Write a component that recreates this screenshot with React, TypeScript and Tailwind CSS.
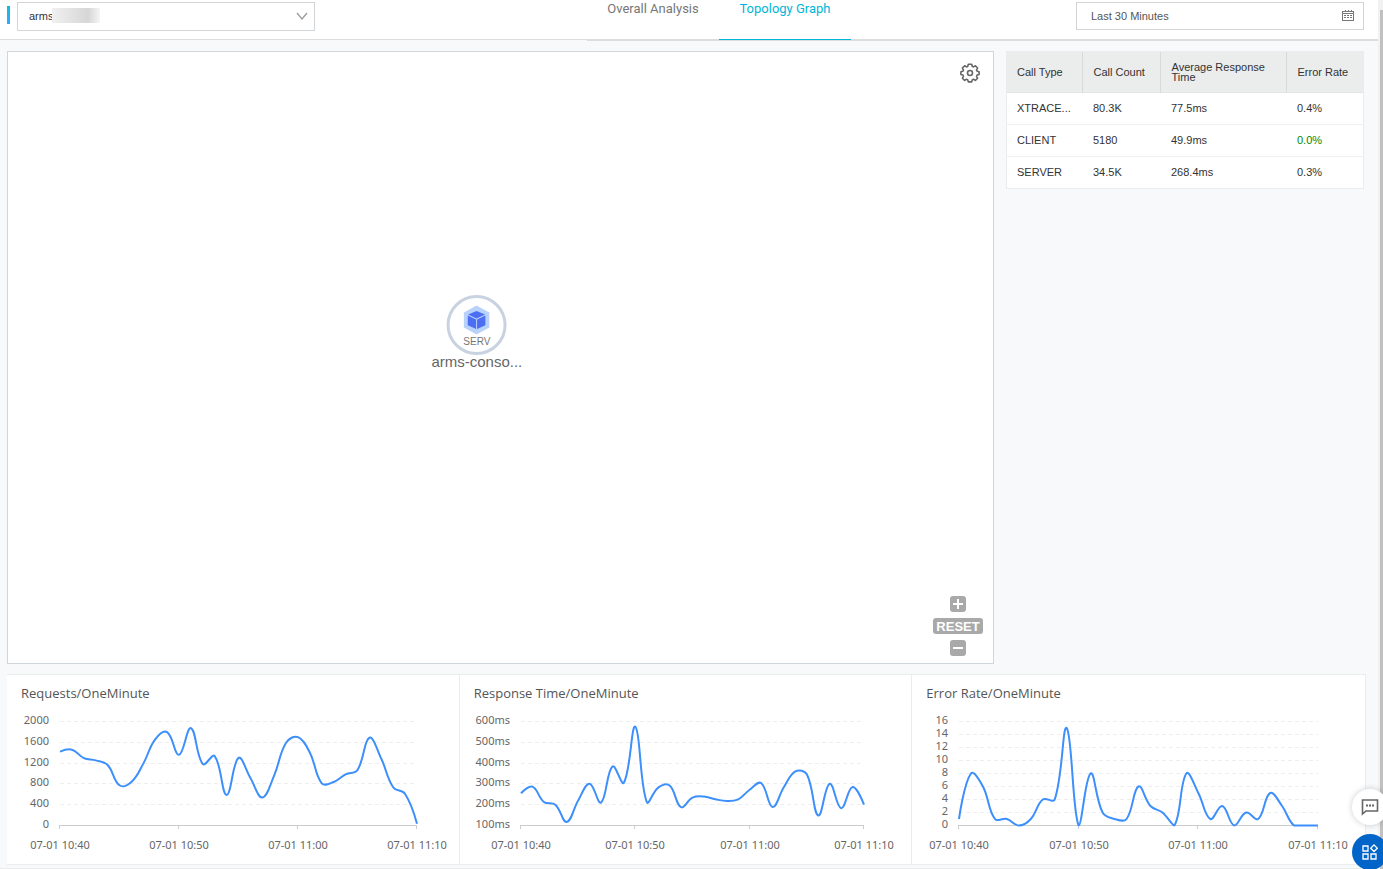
import React, { useLayoutEffect, useRef, useState } from 'react';

interface CallRow {
  type: string;
  count: string;
  responseTime: string;
  errorRate: string;
  healthy?: boolean;
}

interface ChartProps {
  title: string;
  data: number[];
  min?: number;
  max: number;
  step: number;
  unit?: string;
  left: number;
  right: number;
}

type Point = [number, number];

const CALLS: CallRow[] = [
  { type: 'XTRACE...', count: '80.3K', responseTime: '77.5ms', errorRate: '0.4%' },
  { type: 'CLIENT', count: '5180', responseTime: '49.9ms', errorRate: '0.0%', healthy: true },
  { type: 'SERVER', count: '34.5K', responseTime: '268.4ms', errorRate: '0.3%' },
];

const REQUESTS = [
  1420, 1458, 1297, 1252, 1163, 773, 837, 1190, 1655, 1795, 1360, 1872, 1182, 1335, 588, 1300,
  914, 537, 965, 1591, 1700, 1400, 811, 837, 984, 1067, 1687, 1284, 735, 607, 32,
];

const RESPONSE_TIMES = [
  255, 287, 213, 200, 117, 220, 301, 210, 384, 306, 575, 213, 282, 292, 188, 234,
  239, 226, 218, 226, 272, 304, 189, 285, 360, 346, 148, 301, 183, 285, 200,
];

const ERRORS = [
  1, 8, 6, 1, 1, 0, 1, 4, 4, 15, 0, 8, 2, 1, 1, 6,
  3, 2, 0, 8, 5, 1, 3, 0, 2, 1, 5, 3, 0, 0, 0,
];

const TIMES = ['07-01 10:40', '07-01 10:50', '07-01 11:00', '07-01 11:10'];

// Bezier smoothing, control points never go below the axis
function smoothPath(points: Point[], floor: number, smooth = 0.4) {
  const last = points.length - 1;
  let path = `M${points[0][0]},${points[0][1]}`;
  let out: Point = points[0];

  for (let i = 1; i <= last; i++) {
    const prev = points[i - 1];
    const cur = points[i];
    let cpIn: Point = cur;
    let cpOut: Point = cur;

    if (i < last) {
      const next = points[i + 1];
      const lenPrev = Math.hypot(cur[0] - prev[0], cur[1] - prev[1]);
      const lenNext = Math.hypot(next[0] - cur[0], next[1] - cur[1]);
      const ratio = lenNext / (lenNext + lenPrev);
      const vx = (next[0] - prev[0]) * smooth;
      const vy = (next[1] - prev[1]) * smooth;

      cpIn = [cur[0] - vx * (1 - ratio), Math.min(floor, cur[1] - vy * (1 - ratio))];
      cpOut = [cur[0] + vx * ratio, Math.min(floor, cur[1] + vy * ratio)];
    }

    path += `C${out[0]},${out[1]} ${cpIn[0]},${cpIn[1]} ${cur[0]},${cur[1]}`;
    out = cpOut;
  }
  return path;
}

function LineChart({ title, data, min = 0, max, step, unit = '', left, right }: ChartProps) {
  const ref = useRef<HTMLDivElement>(null);
  const [width, setWidth] = useState(452);

  useLayoutEffect(() => {
    const el = ref.current;
    if (!el) return;
    const update = () => setWidth(el.clientWidth);
    update();
    const observer = new ResizeObserver(update);
    observer.observe(el);
    return () => observer.disconnect();
  }, []);

  const top = 10;
  const bottom = 114;
  const plot = width - left - right;
  const y = (v: number) => bottom - ((v - min) / (max - min)) * (bottom - top);
  const ticks: number[] = [];
  for (let v = min; v <= max; v += step) ticks.push(v);
  const points = data.map((v, i): Point => [left + (plot * i) / (data.length - 1), y(v) + 0.5]);

  return (
    <section className="min-w-0 border-r border-[#ebecec] pt-2 last:border-r-0">
      <h2 className="px-[14px] font-['Open_Sans',sans-serif] text-[13px] leading-5 text-[#555]">{title}</h2>
      <div ref={ref} className="mt-2">
        <svg width={width} height={153} className="block font-['Noto_Sans',sans-serif] text-[11px]" role="img" aria-label={title}>
          {ticks.map((v) => (
            <g key={v}>
              {v > min && (
                <line
                  x1={left}
                  x2={width - right}
                  y1={Math.round(y(v)) + 0.5}
                  y2={Math.round(y(v)) + 0.5}
                  stroke="#eee"
                  strokeDasharray="4 3"
                />
              )}
              <text x={left - 11} y={Math.round(y(v)) + 3} textAnchor="end" fill="#666">
                {v}{unit}
              </text>
            </g>
          ))}
          <line x1={left} x2={width - right} y1={bottom + 0.5} y2={bottom + 0.5} stroke="#ccc" />
          {TIMES.map((time, i) => {
            const x = Math.round(left + (plot * i) / (TIMES.length - 1));
            return (
              <g key={time}>
                <line x1={x - 0.5} x2={x - 0.5} y1={bottom} y2={bottom + 4} stroke="#ccc" />
                <text x={x} y={138} textAnchor="middle" fill="#666">{time}</text>
              </g>
            );
          })}
          <path d={smoothPath(points, bottom + 0.5)} fill="none" stroke="#3d8ffb" strokeWidth="2" strokeLinejoin="bevel" />
        </svg>
      </div>
    </section>
  );
}

function GearIcon() {
  return (
    <svg viewBox="0 0 20 20" className="h-5 w-5" fill="none" stroke="#666" strokeWidth="1.6" strokeLinejoin="round">
      <path d="M8.300 1.300h3.400l.5 2 1.300.6 1.900-1.100 2.200 2.200-1.100 1.900.6 1.300 2 .5v2.800l-2 .5-.6 1.300 1.100 1.900-2.200 2.200-1.900-1.100-1.300.6-.5 2H8.300l-.5-2-1.300-.6-1.900 1.100-2.200-2.200 1.100-1.900-.6-1.300-2-.5V8.700l2-.5.6-1.300L2.400 5l2.200-2.200 1.900 1.100 1.300-.6z" />
      <circle cx="10" cy="10" r="2.5" />
    </svg>
  );
}

function CalendarIcon() {
  return (
    <svg viewBox="0 0 12 12" className="h-3 w-3" fill="none" stroke="#777" shapeRendering="crispEdges">
      <path d="M.5 1.500h11v9H.5zM.5 3.500h11M3.500 0v2M6.500 0v2M9.500 0v2" />
      <path d="M2 5.500h8M2 7.500h8" strokeDasharray="2 1" />
    </svg>
  );
}

function CubeIcon() {
  return (
    <svg viewBox="0 0 26 30" className="h-[30px] w-7">
      <path d="M13 1.500 25 8v14L13 28.500 1 22V8z" fill="#b9d2fb" stroke="#b9d2fb" strokeWidth="1.500" strokeLinejoin="round" />
      <path d="M13 6 21.500 9.600 13 13.400 4.500 9.600z" fill="#4c6ef5" />
      <path d="M4.200 10.600 12.500 14.400v9.600L4.200 20.200z" fill="#4c6ef5" />
      <path d="M21.800 10.600 13.500 14.400v9.600L21.800 20.200z" fill="#4c6ef5" />
    </svg>
  );
}

function Header() {
  return (
    <header className="grid h-10 grid-cols-[587fr_791fr] border-b border-[#ddd] bg-white">
      <div className="flex items-start pl-[7px] pt-[2px]">
        <span className="mt-1 h-[18px] w-[3px] bg-linear-to-b from-[#00c1de] to-[#2eabff]" />
        <div className="relative ml-[7px]">
          <select
            aria-label="Application"
            className="block h-[29px] w-[298px] appearance-none border border-[#d3d6d9] bg-white px-[11px] text-[11px] text-[#333] outline-none"
          >
            <option>arms</option>
          </select>
          <span className="pointer-events-none absolute left-[35px] top-[6px] h-[15px] w-12 bg-linear-to-r from-[#efefef] from-5% via-[#d6d6d6] via-75% to-[#f5f5f5]" />
          <svg viewBox="0 0 12 8" className="pointer-events-none absolute right-[7px] top-[10px] h-2 w-3" fill="none" stroke="#999" strokeWidth="1.2">
            <path d="M1 1l5 6 5-6" />
          </svg>
        </div>
      </div>

      <div className="-mb-[2px] flex items-stretch justify-between border-b-2 border-[#ddd]">
        <nav className="-mb-[2px] flex text-[13px] leading-[18px]">
          <a href="#overall" className="w-[132px] text-center font-['Roboto',sans-serif] text-[#777]">Overall Analysis</a>
          <a href="#topology" className="mb-px w-[132px] border-b border-[#00b7d8] text-center font-['Roboto',sans-serif] text-[#00b7d8]">
            Topology Graph
          </a>
        </nav>
        <div className="mr-[14px] mt-[2px] flex h-7 w-[288px] items-center border border-[#d3d6d9] bg-white pl-[14px] pr-[9px]">
          <input
            readOnly
            aria-label="Time range"
            value="Last 30 Minutes"
            className="min-w-0 flex-1 text-[11px] text-[#555] outline-none"
          />
          <CalendarIcon />
        </div>
      </div>
    </header>
  );
}

function Topology() {
  const zoomButton = 'flex h-4 w-4 items-center justify-center rounded-[3px] bg-[#a9a9a9]';
  return (
    <section className="relative h-[613px] min-w-0 flex-1 border border-[#cfd6dc] bg-white">
      <button aria-label="Settings" className="absolute right-[13px] top-[11px]">
        <GearIcon />
      </button>

      <div className="absolute left-[47.6%] top-[243px] flex -translate-x-1/2 flex-col items-center">
        <div className="flex h-[60px] w-[60px] flex-col items-center rounded-full border-3 border-[#c9d2e0] pt-[7px]">
          <CubeIcon />
          <span className="text-[10px] leading-[14px] text-[#777]">SERV</span>
        </div>
        <span className="text-[15px] leading-[14px] text-[#666]">arms-conso...</span>
      </div>

      <div className="absolute bottom-[7px] right-[10px] flex flex-col items-center gap-[6px]">
        <button aria-label="Zoom in" className={zoomButton}>
          <svg viewBox="0 0 10 10" className="h-[10px] w-[10px]" stroke="#fff" strokeWidth="2"><path d="M0 5h10M5 0v10" /></svg>
        </button>
        <button className="h-4 w-[50px] rounded-[3px] bg-[#a9a9a9] text-[13px] font-bold leading-[17px] text-white">RESET</button>
        <button aria-label="Zoom out" className={zoomButton}>
          <svg viewBox="0 0 10 10" className="h-[10px] w-[10px]" stroke="#fff" strokeWidth="2"><path d="M0 5h10" /></svg>
        </button>
      </div>
    </section>
  );
}

function CallTable() {
  return (
    <div className="w-[358px] shrink-0 self-start border border-[#ebecec] bg-white">
      <table className="w-full table-fixed border-collapse text-left text-[11px] text-[#333]">
        <colgroup>
          <col className="w-[75px]" />
          <col className="w-[78px]" />
          <col className="w-[126px]" />
          <col />
        </colgroup>
        <thead className="bg-[#ebecec] leading-[10px]">
          <tr className="h-10 border-b border-[#e3e5e6]">
            <th className="border-r border-[#d8dada] pl-[10px] font-normal">Call Type</th>
            <th className="border-r border-[#d8dada] pl-[11px] font-normal">Call Count</th>
            <th className="border-r border-[#d8dada] pl-[11px] font-normal">Average Response Time</th>
            <th className="pl-[11px] font-normal">Error Rate</th>
          </tr>
        </thead>
        <tbody>
          {CALLS.map((row) => (
            <tr key={row.type} className="h-8 border-b border-[#f0f1f2] last:border-b-0">
              <td className="pl-[10px]">{row.type}</td>
              <td className="pl-[11px]">{row.count}</td>
              <td className="pl-[11px]">{row.responseTime}</td>
              <td className={row.healthy ? 'pl-[11px] text-[#008a00]' : 'pl-[11px]'}>{row.errorRate}</td>
            </tr>
          ))}
        </tbody>
      </table>
    </div>
  );
}

export default function App() {
  return (
    <div className="flex min-h-screen bg-[#f7f9fb] font-['Liberation_Sans',Arial,sans-serif]">
      <div className="flex min-w-0 flex-1 flex-col border-b border-[#ebecec]">
        <Header />

        <main className="flex-1 pl-[7px] pr-3 pt-[11px]">
          <div className="flex gap-3 pr-[2px]">
            <Topology />
            <CallTable />
          </div>

          <div className="mt-[10px] grid grid-cols-3 border-y border-r border-[#ebecec] bg-white">
            <LineChart title="Requests/OneMinute" data={REQUESTS} max={2000} step={400} left={53} right={42} />
            <LineChart title="Response Time/OneMinute" data={RESPONSE_TIMES} min={100} max={600} step={100} unit="ms" left={61} right={48} />
            <LineChart title="Error Rate/OneMinute" data={ERRORS} max={16} step={2} left={47} right={47} />
          </div>
        </main>
      </div>

      {/* Scroll track */}
      <div className="w-[5px] shrink-0 bg-[#f1f1f1] pl-[2px] pt-[10px]">
        <div className="h-full bg-[#c1c1c1]" />
      </div>

      {/* Floating actions */}
      <div className="fixed -bottom-px right-[-5px] flex flex-col items-center gap-[9px]">
        <button aria-label="Feedback" className="flex h-9 w-9 items-center justify-center rounded-full bg-white shadow-[0_0_6px_rgba(0,0,0,0.2)]">
          <svg viewBox="0 0 18 18" className="h-[18px] w-[18px]" fill="none" stroke="#666" strokeWidth="1.6">
            <path d="M1.500 2h15v11H5l-3.500 3z" />
            <path d="M5 7.500h8" strokeWidth="2" strokeDasharray="2 1" />
          </svg>
        </button>
        <button aria-label="Apps" className="flex h-9 w-9 items-center justify-center rounded-full bg-[#0064c8]">
          <svg viewBox="0 0 16 16" className="h-4 w-4" fill="none" stroke="#fff" strokeWidth="1.3">
            <path d="M1 2h5v5H1zM1 10h5v5H1zM9 10h5v5H9zM12 .900l3.300 3.300L12 7.500 8.700 4.200z" />
          </svg>
        </button>
      </div>
    </div>
  );
}
